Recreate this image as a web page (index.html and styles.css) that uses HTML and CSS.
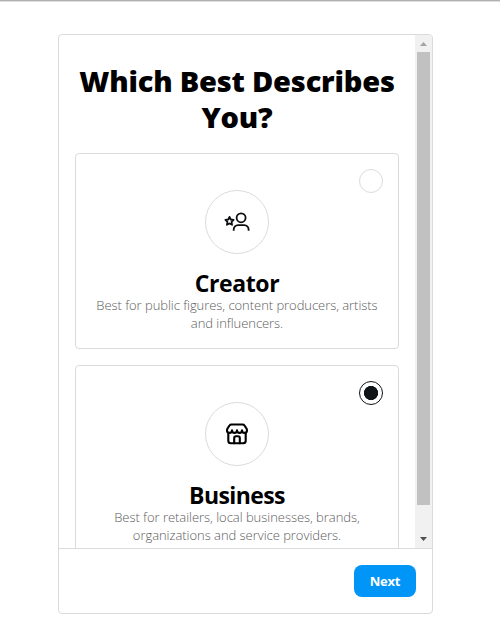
FILE: index.html
```html
<!DOCTYPE html>
<html lang="en">
<head>
<meta charset="utf-8">
<title>Account type</title>
<link rel="stylesheet" href="styles.css">
</head>
<body>
<main class="dialog">
  <div class="viewport">
    <div class="content">
      <h1 class="heading">Which Best Describes<br>You?</h1>
      <section class="card">
        <span class="radio"></span>
        <div class="icon-ring">
          <svg width="26" height="26" viewBox="0 0 26 26" fill="none" stroke="#0c0e10" stroke-width="1.8" stroke-linejoin="round" stroke-linecap="butt">
            <circle cx="17.1" cy="8.8" r="4.5"/>
            <path d="M9.700 21.700v-1.300a4.300 4.300 0 0 1 4.300-4.300h6.300a4.300 4.300 0 0 1 4.300 4.300v1.300"/>
            <path d="M5.500 7.900l1.250 2.600 2.850.400-2.050 2 .500 2.900-2.550-1.350-2.550 1.350.500-2.900-2.050-2 2.850-.400z"/>
          </svg>
        </div>
        <h2 class="name creator">Creator</h2>
        <p class="copy">Best for public figures, content producers, artists<br>and influencers.</p>
      </section>
      <section class="card">
        <span class="radio selected"></span>
        <div class="icon-ring">
          <svg width="24" height="24" viewBox="0 0 24 24" fill="none" stroke="#000" stroke-width="2.100" stroke-linejoin="round" stroke-linecap="round">
            <path d="M3.300 11V18.800a2.500 2.500 0 0 0 2.500 2.500h12.400a2.500 2.500 0 0 0 2.500-2.500V11"/>
            <path d="M9.200 21.300v-5.200a1.800 1.800 0 0 1 1.800-1.800h2a1.800 1.800 0 0 1 1.800 1.800v5.200"/>
            <path d="M6.500 2.500h11q1.300 0 2 1l1.600 2.300q.900 1.200.900 2.400a2.500 2.700 0 0 1-5 0 2.500 2.700 0 0 1-5 0 2.500 2.700 0 0 1-5 0 2.500 2.700 0 0 1-5 0q0-1.200.900-2.400l1.600-2.300q.700-1 2-1z"/>
          </svg>
        </div>
        <h2 class="name business">Business</h2>
        <p class="copy wide">Best for retailers, local businesses, brands,<br>organizations and service providers.</p>
      </section>
    </div>
    <div class="scrollbar">
      <span class="arrow up"></span>
      <span class="thumb"></span>
      <span class="arrow down"></span>
    </div>
  </div>
  <footer class="footer"><button class="next">Next</button></footer>
</main>
</body>
</html>
```
FILE: styles.css
```css
* { box-sizing: border-box; }
body {
  margin: 0;
  height: 639px;
  overflow: hidden;
  padding-top: 32px;
  border-top: 1px solid #b0b0b0;
  box-shadow: inset 0 1px #dfdfdf;
  background: #fff;
  font-family: "Open Sans", "Noto Sans", sans-serif;
  color: #000;
}
.dialog {
  width: 375px;
  height: 580px;
  margin: 1px 0 0 58px;
  border: 1px solid #dbdbdb;
  border-radius: 4px;
  overflow: hidden;
}
.viewport { display: flex; height: 513px; }
.content { width: 356px; height: 513px; padding: 28px 16px 0; overflow: hidden; }
.heading {
  margin: 0 -16px 18px;
  font-size: 29px;
  line-height: 36px;
  font-weight: 800;
  letter-spacing: -.2px;
  text-align: center;
  white-space: nowrap;
}
.card {
  position: relative;
  height: 196px;
  margin-bottom: 16px;
  padding-top: 36px;
  border: 1px solid #dbdbdb;
  border-radius: 4px;
  text-align: center;
  white-space: nowrap;
}
.radio {
  position: absolute;
  top: 15px;
  right: 15px;
  width: 24px;
  height: 24px;
  border: 1px solid #dbdbdb;
  border-radius: 50%;
}
.selected { border-color: #0f1419; background: radial-gradient(circle, #0f1419 6.8px, #fff 7.4px); }
.icon-ring {
  display: flex;
  align-items: center;
  justify-content: center;
  width: 64px;
  height: 64px;
  margin: 0 auto 15px;
  border: 1px solid #dbdbdb;
  border-radius: 50%;
}
.name { margin: 0 0 -1px; font-size: 23px; line-height: 28px; font-weight: 700; }
.creator { letter-spacing: -.4px; }
.business { letter-spacing: -.6px; }
.copy { margin: 0; font-size: 13px; line-height: 18px; font-weight: 300; letter-spacing: -.05px; color: #5c5c5c; }
.wide { letter-spacing: -.04px; }
.scrollbar {
  display: flex;
  flex-direction: column;
  align-items: center;
  width: 17px;
  height: 513px;
  background: #f1f1f1;
}
.arrow { width: 7px; height: 4px; background: #a3a3a3; }
.up { margin: 7px 0 6px; clip-path: polygon(50% 0, 100% 100%, 0 100%); }
.down { margin-top: 32px; background: #505050; clip-path: polygon(0 0, 100% 0, 50% 100%); }
.thumb { width: 13px; height: 453px; background: #c1c1c1; }
.footer {
  display: flex;
  justify-content: flex-end;
  height: 65px;
  padding: 16px;
  border-top: 1px solid #dbdbdb;
}
.next {
  width: 62px;
  height: 32px;
  padding: 0;
  border: 0;
  border-radius: 8px;
  background: #0095f6;
  color: #fff;
  font: 700 13px/32px "Open Sans", sans-serif;
  letter-spacing: -.2px;
}
```
